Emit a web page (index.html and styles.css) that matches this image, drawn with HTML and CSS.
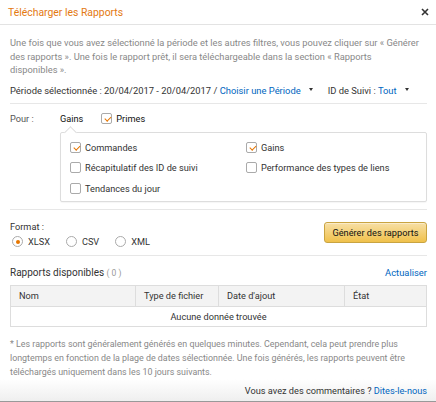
FILE: index.html
```html
<!DOCTYPE html>
<html lang="fr">
<head>
<meta charset="utf-8">
<link rel="stylesheet" href="styles.css">
</head>
<body>
<div class="modal">
  <div class="header">
    <span class="title">Télécharger les Rapports</span>
    <span class="close">
      <svg width="8" height="8" viewBox="0 0 8 8"><path d="M1 1L7 7M7 1L1 7" stroke="#333" stroke-width="1.6"/></svg>
    </span>
  </div>
  <div class="content">
    <p class="intro">Une fois que vous avez sélectionné la période et les autres filtres, vous pouvez cliquer sur « Générer<br>des rapports ». Une fois le rapport prêt, il sera téléchargeable dans la section « Rapports<br>disponibles ».</p>
    <div class="period">
      <span>Période sélectionnée : 20/04/2017 - 20/04/2017 / <a class="link">Choisir une Période</a></span>
      <span class="caret"></span>
      <span class="idsuivi">ID de Suivi : <a class="link">Tout</a></span>
      <span class="caret"></span>
    </div>
    <div class="sep"></div>
    <div class="pour">
      <span class="label">Pour :</span>
      <span class="gains">Gains</span>
      <span class="cb checked"></span>
      <span class="primes">Primes</span>
    </div>
    <div class="box">
      <div class="grid">
        <label class="item"><span class="cb checked"></span>Commandes</label>
        <label class="item"><span class="cb checked"></span>Gains</label>
        <label class="item"><span class="cb"></span>Récapitulatif des ID de suivi</label>
        <label class="item"><span class="cb"></span>Performance des types de liens</label>
        <label class="item"><span class="cb"></span>Tendances du jour</label>
      </div>
    </div>
    <div class="sep sep2"></div>
    <div class="format-row">
      <div class="format">
        <div class="flabel">Format :</div>
        <div class="radios">
          <span class="radio on"></span><span class="rtext r1">XLSX</span>
          <span class="radio"></span><span class="rtext r2">CSV</span>
          <span class="radio"></span><span class="rtext">XML</span>
        </div>
      </div>
      <button class="btn">Générer des rapports</button>
    </div>
    <div class="sep sep3"></div>
    <div class="avail">
      <span>Rapports disponibles <span class="count">( 0 )</span></span>
      <a class="link">Actualiser</a>
    </div>
    <table class="tbl">
      <thead>
        <tr><th class="c1">Nom</th><th class="c2">Type de fichier</th><th class="c3">Date d'ajout</th><th class="c4">État</th></tr>
      </thead>
      <tbody>
        <tr><td colspan="4" class="empty">Aucune donnée trouvée</td></tr>
      </tbody>
    </table>
    <p class="note">* Les rapports sont généralement générés en quelques minutes. Cependant, cela peut prendre plus<br>longtemps en fonction de la plage de dates sélectionnée. Une fois générés, les rapports peuvent être<br>téléchargés uniquement dans les 10 jours suivants.</p>
  </div>
  <div class="footer">Vous avez des commentaires ? <a class="link">Dites-le-nous</a></div>
</div>
</body>
</html>
```
FILE: styles.css
```css
* { box-sizing: border-box; }
html, body { margin: 0; padding: 0; background: #fff; }
body {
  font-family: Roboto, "Open Sans", Arial, sans-serif;
  font-size: 9.2px;
  color: #111;
  width: 436px;
  height: 402px;
  overflow: hidden;
}
.modal { width: 436px; height: 402px; display: flex; flex-direction: column; }
.header {
  height: 25px;
  flex: none;
  border-bottom: 1px solid #e3e3e3;
  display: flex;
  align-items: center;
  justify-content: space-between;
  padding: 0 7px 0 8px;
}
.title { color: #e47911; font-size: 10.4px; }
.close { display: flex; }
.content { padding: 0 9px 0 10px; flex: 1; display: flex; flex-direction: column; }
.link { color: #0066c0; text-decoration: none; }
.intro {
  margin: 11px 0 0 0;
  color: #888;
  line-height: 13.5px;
  height: 41px;
  font-size: 9.3px;
}
.period {
  margin-top: 6px;
  display: flex;
  align-items: center;
  height: 14px;
  color: #333;
  white-space: nowrap;
  font-size: 9.4px;
}
.caret {
  width: 0; height: 0;
  border-left: 2.5px solid transparent;
  border-right: 2.5px solid transparent;
  border-top: 3px solid #333;
  margin-left: 8px;
  margin-top: -2px;
}
.idsuivi { margin-left: 15px; }
.sep { height: 1px; background: #e7e7e7; margin-top: 6px; flex: none; }
.pour { display: flex; align-items: center; height: 14px; margin-top: 7px; }
.pour .label { width: 50px; color: #555; }
.pour .gains { color: #111; }
.pour .cb { margin-left: 18px; margin-right: 4px; }
.cb {
  display: inline-block;
  width: 11px; height: 11px;
  border: 1px solid #aaa;
  border-radius: 2px;
  background: #fff;
  position: relative;
  flex: none;
}
.cb.checked::after {
  content: "";
  position: absolute;
  left: 3.5px; top: 1px;
  width: 2.5px; height: 5px;
  border-right: 1.5px solid #e77600;
  border-bottom: 1.5px solid #e77600;
  transform: rotate(45deg);
}
.box {
  margin: 7px 0 0 50px;
  border: 1px solid #ddd;
  border-radius: 2px;
  background: #fff;
  position: relative;
  height: 70px;
  flex: none;
  box-shadow: 0 1px 1px rgba(0,0,0,0.04);
}
.box::before {
  content: "";
  position: absolute;
  top: -5px; left: 5px;
  width: 8px; height: 8px;
  background: #fff;
  border-left: 1px solid #ddd;
  border-top: 1px solid #ddd;
  transform: rotate(45deg);
}
.grid {
  display: grid;
  grid-template-columns: 176px 1fr;
  row-gap: 9.5px;
  padding: 8.5px 0 0 9px;
}
.item { display: flex; align-items: center; height: 11px; color: #333; }
.item .cb { margin-right: 4px; }
.sep2 { margin-top: 7px; }
.format-row {
  display: flex;
  justify-content: space-between;
  align-items: flex-start;
  margin-top: 10px;
}
.flabel { color: #333; line-height: 13px; }
.radios { display: flex; align-items: center; margin-top: 3px; margin-left: 2px; height: 11px; }
.radio {
  width: 11px; height: 11px;
  border: 1px solid #aaa;
  border-radius: 50%;
  display: inline-block;
  position: relative;
  flex: none;
}
.radio.on::after {
  content: "";
  position: absolute;
  left: 2.5px; top: 2.5px;
  width: 4px; height: 4px;
  border-radius: 50%;
  background: #e77600;
}
.rtext { margin-left: 5px; color: #333; }
.r1 { margin-right: 16px; }
.r2 { margin-right: 16px; }
.btn {
  margin-top: 1.5px;
  width: 103px; height: 21px;
  border: 1px solid #c9a441;
  border-radius: 3px;
  background: linear-gradient(#f7dfa5, #f0c14b);
  font-family: inherit;
  font-size: 9.2px;
  color: #111;
  padding: 0;
  box-shadow: 0 1px 0 rgba(255,255,255,0.4) inset;
}
.sep3 { margin-top: 7.5px; }
.avail {
  display: flex;
  justify-content: space-between;
  align-items: center;
  margin-top: 10px;
  height: 14px;
  color: #333;
  font-size: 10px;
}
.avail .count { color: #999; font-size: 8.5px; }
.avail .link { font-size: 9.4px; }
.tbl {
  margin-top: 5px;
  width: 100%;
  border-collapse: collapse;
  table-layout: fixed;
}
.tbl th {
  background: #f3f3f3;
  border: 1px solid #ddd;
  height: 21px;
  font-weight: normal;
  text-align: left;
  padding: 0 0 0 8px;
  color: #333;
}
.tbl th.c1 { width: 125px; }
.tbl th.c2 { width: 83px; }
.tbl th.c3 { width: 126px; }
.tbl td.empty {
  border: 1px solid #ddd;
  height: 20px;
  text-align: center;
  color: #333;
  padding: 0;
}
.note {
  margin: 10px 0 0 0;
  color: #888;
  line-height: 14px;
  font-size: 8.9px;
}
.footer {
  height: 24px;
  flex: none;
  background: linear-gradient(#fff, #efefef);
  border-bottom: 2px solid #999;
  text-align: right;
  padding: 5px 9px 0 0;
  line-height: 14px;
  color: #333;
}
```
